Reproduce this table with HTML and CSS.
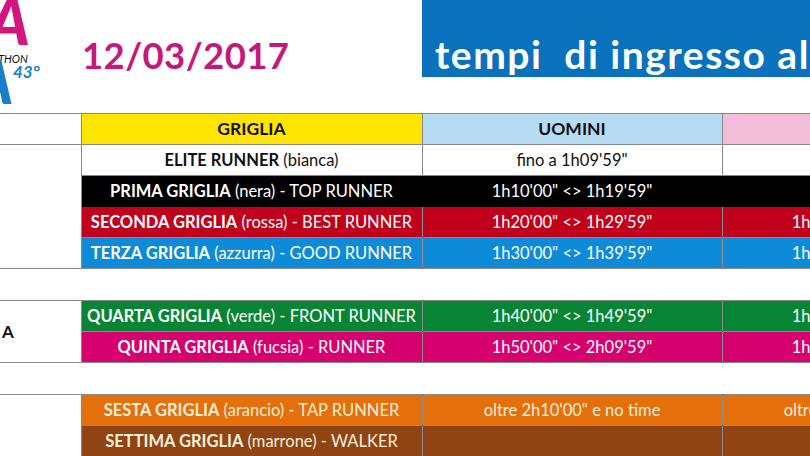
FILE: index.html
```html
<!DOCTYPE html>
<html lang="it">
<head>
<meta charset="utf-8">
<title>Maratona - tempi di ingresso alle griglie</title>
<link rel="stylesheet" href="styles.css">
</head>
<body>
<header class="top">
  <div class="logo">
    <svg width="81" height="110" viewBox="0 0 81 110">
      <text x="-12" y="45" class="logo-a">A</text>
      <text x="-2" y="63" class="logo-thon">THON</text>
      <text x="-26" y="104" class="logo-b">A</text>
      <text x="13" y="78" class="logo-43">43°</text>
    </svg>
  </div>
  <div class="date">12/03/2017</div>
  <div class="banner">tempi&nbsp; di ingresso alle griglie</div>
</header>
<table class="grid">
  <colgroup>
    <col class="c-side"><col class="c-grid"><col class="c-men"><col class="c-women">
  </colgroup>
  <tr class="r-head">
    <td class="side"></td>
    <td class="h-grid">GRIGLIA</td>
    <td class="h-men">UOMINI</td>
    <td class="h-women">DONNE</td>
  </tr>
  <tr class="r-elite">
    <td class="side" rowspan="4"></td>
    <td><b>ELITE RUNNER</b> (bianca)</td>
    <td>fino a 1h09'59"</td>
    <td>fino a 1h19'59"</td>
  </tr>
  <tr class="r-black">
    <td><b>PRIMA GRIGLIA</b> (nera) - TOP RUNNER</td>
    <td>1h10'00" &lt;&gt; 1h19'59"</td>
    <td></td>
  </tr>
  <tr class="r-red">
    <td><b>SECONDA GRIGLIA</b> (rossa) - BEST RUNNER</td>
    <td>1h20'00" &lt;&gt; 1h29'59"</td>
    <td>1h20'00" &lt;&gt; 1h34'59"</td>
  </tr>
  <tr class="r-blue">
    <td><b>TERZA GRIGLIA</b> (azzurra) - GOOD RUNNER</td>
    <td>1h30'00" &lt;&gt; 1h39'59"</td>
    <td>1h35'00" &lt;&gt; 1h49'59"</td>
  </tr>
  <tr class="r-gap"><td colspan="4"></td></tr>
  <tr class="r-green">
    <td class="side side-label" rowspan="2">A</td>
    <td><b>QUARTA GRIGLIA</b> (verde) - FRONT RUNNER</td>
    <td>1h40'00" &lt;&gt; 1h49'59"</td>
    <td>1h45'00" &lt;&gt; 1h59'59"</td>
  </tr>
  <tr class="r-pink">
    <td><b>QUINTA GRIGLIA</b> (fucsia) - RUNNER</td>
    <td>1h50'00" &lt;&gt; 2h09'59"</td>
    <td>1h55'00" &lt;&gt; 2h19'59"</td>
  </tr>
  <tr class="r-gap"><td colspan="4"></td></tr>
  <tr class="r-orange">
    <td class="side" rowspan="2"></td>
    <td><b>SESTA GRIGLIA</b> (arancio) - TAP RUNNER</td>
    <td>oltre 2h10'00" e no time</td>
    <td>oltre 2h20'00" e no time</td>
  </tr>
  <tr class="r-brown">
    <td><b>SETTIMA GRIGLIA</b> (marrone) - WALKER</td>
    <td></td>
    <td></td>
  </tr>
</table>
</body>
</html>
```
FILE: styles.css
```css
html, body {
  margin: 0;
  padding: 0;
  background: #fff;
  overflow: hidden;
}
body {
  width: 810px;
  height: 456px;
  font-family: Lato, "Open Sans", sans-serif;
  color: #111;
}
.top {
  display: flex;
  height: 113px;
  align-items: flex-start;
}
.logo {
  width: 81px;
  flex: none;
  height: 110px;
}
.logo svg { display: block; }
.logo-a {
  font: italic 900 64px Lato, sans-serif;
  fill: #d4157f;
}
.logo-b {
  font: italic 900 60px Lato, sans-serif;
  fill: #1a7fc8;
}
.logo-thon {
  font: italic 400 11px Lato, sans-serif;
  fill: #111;
}
.logo-43 {
  font: italic 700 17px Lato, sans-serif;
  fill: #1a7fc8;
}
.date {
  width: 341px;
  flex: none;
  box-sizing: border-box;
  padding: 35px 0 0 1px;
  font-size: 36.5px;
  font-weight: 700;
  color: #c4197b;
  line-height: 40px;
  letter-spacing: 0.4px;
}
.banner {
  flex: 1 0 auto;
  height: 77px;
  background: #0a72bd;
  color: #fff;
  font-size: 39px;
  font-weight: 700;
  line-height: 40px;
  padding: 34px 0 0 13px;
  box-sizing: border-box;
  white-space: nowrap;
  letter-spacing: 1.5px;
}
.grid {
  border-collapse: collapse;
  table-layout: fixed;
  width: 1022px;
  font-size: 16.5px;
}
.c-side { width: 81px; }
.c-grid { width: 341px; }
.c-men { width: 300px; }
.c-women { width: 300px; }
.grid td {
  height: 30px;
  padding: 0;
  text-align: center;
  white-space: nowrap;
  overflow: hidden;
  border: 1px solid rgba(0, 0, 0, 0.45);
  line-height: 30px;
}
.grid b { font-weight: 700; }
.grid td.side {
  background: #fff;
  color: #111;
  border: 1px solid #8a8a8a;
  border-left: none;
}
.grid td.side-label {
  text-align: left;
  font-weight: 700;
  padding-left: 2px;
  font-size: 17px;
}
.r-head td { font-weight: 700; border-color: #8a8a8a; font-size: 17.5px; }
.h-grid { background: #ffe500; }
.h-men { background: #b6dcf3; }
.h-women { background: #f2bdd8; }
.r-elite td { background: #fff; border-color: #8a8a8a; }
.r-black td { background: #000; color: #fff; border-color: #000; }
.r-red td { background: #c1001b; color: #fff; }
.r-blue td { background: #0d8bd8; color: #fff; }
.r-green td { background: #088534; color: #fff; }
.r-pink td { background: #d6006e; color: #fff; }
.r-orange td { background: #e56f0b; color: #fbefd9; }
.r-brown td { background: #904414; color: #fbefd9; }
.grid .r-gap td {
  height: 31px;
  background: #fff;
  border: none;
}
.grid .r-blue td { height: 29px; }
```
